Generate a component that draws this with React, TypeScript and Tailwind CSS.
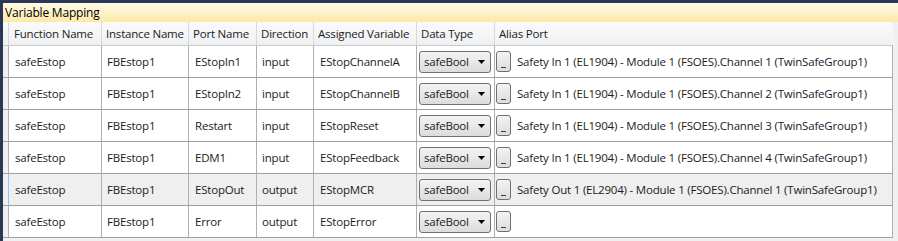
const rows = [
  { fn: 'safeEstop', inst: 'FBEstop1', port: 'EStopIn1', dir: 'input', v: 'EStopChannelA', alias: 'Safety In 1 (EL1904) - Module 1 (FSOES).Channel 1 (TwinSafeGroup1)' },
  { fn: 'safeEstop', inst: 'FBEstop1', port: 'EStopIn2', dir: 'input', v: 'EStopChannelB', alias: 'Safety In 1 (EL1904) - Module 1 (FSOES).Channel 2 (TwinSafeGroup1)' },
  { fn: 'safeEstop', inst: 'FBEstop1', port: 'Restart', dir: 'input', v: 'EStopReset', alias: 'Safety In 1 (EL1904) - Module 1 (FSOES).Channel 3 (TwinSafeGroup1)' },
  { fn: 'safeEstop', inst: 'FBEstop1', port: 'EDM1', dir: 'input', v: 'EStopFeedback', alias: 'Safety In 1 (EL1904) - Module 1 (FSOES).Channel 4 (TwinSafeGroup1)' },
  { fn: 'safeEstop', inst: 'FBEstop1', port: 'EStopOut', dir: 'output', v: 'EStopMCR', alias: 'Safety Out 1 (EL2904) - Module 1 (FSOES).Channel 1 (TwinSafeGroup1)', selected: true },
  { fn: 'safeEstop', inst: 'FBEstop1', port: 'Error', dir: 'output', v: 'EStopError', alias: '' },
];

const headers = ['Function Name', 'Instance Name', 'Port Name', 'Direction', 'Assigned Variable', 'Data Type', 'Alias Port'];

const cols = 'grid grid-cols-[6px_93px_87px_68px_57px_103px_78px_398px]';

function Combo() {
  return (
    <div className="flex h-[22px] w-[72px] items-center justify-between rounded-[3px] border border-[#707070] bg-gradient-to-b from-[#f3f3f3] to-[#dcdcdc] pl-[4px] pr-[5px]">
      <span>safeBool</span>
      <svg width="7" height="4" viewBox="0 0 7 4" className="mt-[1px]">
        <path d="M0 0h7L3.5 4z" fill="#000" />
      </svg>
    </div>
  );
}

function Ellipsis() {
  return (
    <div className="flex h-[21px] w-[15px] shrink-0 items-end justify-center rounded-[3px] border border-[#707070] bg-gradient-to-b from-[#f3f3f3] to-[#dcdcdc] pb-[3px]">
      <div className="h-[1px] w-[5px] bg-[#404040]" />
    </div>
  );
}

export default function App() {
  return (
    <div className="h-[241px] w-[898px] overflow-hidden bg-[#293955] pl-[3px] pt-[3px] font-['Open_Sans',sans-serif] text-[11.5px] tracking-[-0.2px] text-[#1b1b1b]">
      <div className="flex h-full flex-col bg-[#f0f0f0]">
        {/* Title */}
        <div className="flex h-[19px] items-center bg-gradient-to-b from-[#fffbea] to-[#fde8a6] pl-[2px] text-[12px] text-black">
          Variable Mapping
        </div>

        <div className="w-[890px]">
          {/* Header */}
          <div className={`${cols} h-[24px] border-b border-[#c9c9c9] bg-gradient-to-b from-[#fbfbfc] to-[#eef0f2]`}>
            <div className="border-r border-[#d8d8d8]" />
            {headers.map((h, i) => (
              <div key={h} className={`flex items-center overflow-hidden whitespace-nowrap px-[4px] ${i === 0 ? 'pl-[5px]' : ''} ${i < 6 ? 'border-r border-[#d8d8d8]' : ''}`}>
                {h}
              </div>
            ))}
          </div>

          {rows.map((r, i) => (
            <div key={i} className={`${cols} h-[32px] border-b border-[#a0a0a0] ${r.selected ? 'bg-[#efefef]' : 'bg-white'}`}>
              <div className={`border-r ${r.selected ? 'border-[#8ec7f0]' : 'border-[#b0b0b0]'} bg-[#f0f0f0]`} />
              <div className="flex items-center border-r border-[#b0b0b0] pl-[6px]">{r.fn}</div>
              <div className="flex items-center border-r border-[#b0b0b0] pl-[5px]">{r.inst}</div>
              <div className="flex items-center border-r border-[#b0b0b0] pl-[6px]">{r.port}</div>
              <div className="flex items-center border-r border-[#b0b0b0] pl-[5px]">{r.dir}</div>
              <div className="flex items-center border-r border-[#b0b0b0] pl-[6px]">{r.v}</div>
              <div className="flex items-center border-r border-[#b0b0b0] pl-[2px]">
                <Combo />
              </div>
              <div className="flex items-center overflow-hidden border-r border-[#b0b0b0] pl-[1px]">
                <Ellipsis />
                <span className="ml-[6px] whitespace-nowrap">{r.alias}</span>
              </div>
            </div>
          ))}
        </div>
      </div>
    </div>
  );
}
